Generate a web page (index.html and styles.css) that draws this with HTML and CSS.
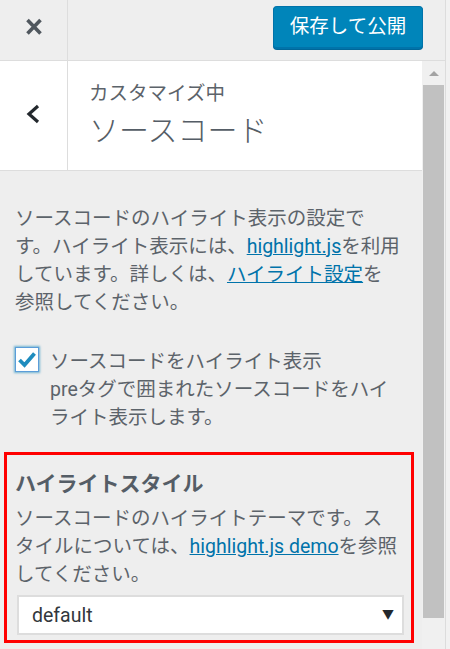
FILE: index.html
```html
<!DOCTYPE html>
<html lang="ja">

<head>
    <meta charset="utf-8">
    <title>ソースコード - カスタマイズ</title>
    <link rel="stylesheet" href="styles.css">
</head>

<body>
    <div class="sidebar">
        <!-- top bar: close and publish -->
        <div class="topbar">
            <div class="close">
                <svg width="20" height="20" viewBox="0 0 20 20">
                    <path d="M3.5 3 L16.5 16.5 M16.5 3 L3.5 16.5" stroke="#50575e" stroke-width="3.6" fill="none" />
                </svg>
            </div>
            <div class="actions">
                <span class="publish">保存して公開</span>
            </div>
        </div>

        <div class="main">
            <div class="panel">
                <div class="head">
                    <div class="back">
                        <svg width="20" height="24" viewBox="0 0 20 24">
                            <polyline points="14,4 5,12 14,20" stroke="#23282d" stroke-width="3.2" fill="none" />
                        </svg>
                    </div>
                    <div class="head-title">
                        <span class="crumb">カスタマイズ中</span>
                        <h2 class="section-name">ソースコード</h2>
                    </div>
                </div>

                <div class="content">
                    <!-- line breaks kept as in the original panel -->
                    <p class="desc">ソースコードのハイライト表示の設定で<br>す。ハイライト表示には、<a href="#">highlight.js</a>を利用<br>しています。詳しくは、<a href="#">ハイライト設定</a>を<br>参照してください。</p>

                    <div class="check-row">
                        <span class="checkbox">
                            <svg width="22" height="22" viewBox="0 0 22 22">
                                <polyline points="3.5,11 8.5,16 18.5,4.5" stroke="#1e8cbe" stroke-width="3.8" fill="none" />
                            </svg>
                        </span>
                        <div class="check-text">
                            <div class="check-label">ソースコードをハイライト表示</div>
                            <div class="check-desc">preタグで囲まれたソースコードをハイ<br>ライト表示します。</div>
                        </div>
                    </div>

                    <!-- highlighted control (red frame) -->
                    <div class="control">
                        <div class="control-title">ハイライトスタイル</div>
                        <div class="control-desc">ソースコードのハイライトテーマです。ス<br>タイルについては、<a href="#">highlight.js demo</a>を参照<br>してください。</div>
                        <div class="select">
                            <span>default</span>
                            <span class="caret">▼</span>
                        </div>
                    </div>
                </div>
            </div>

            <div class="scrollbar">
                <div class="arrow"></div>
                <div class="thumb"></div>
            </div>
        </div>
    </div>
</body>

</html>
```

FILE: styles.css
```css
html,
body {
    margin: 0;
    height: 100%;
    background: #f1f1f1;
}

body {
    font-family: Roboto, "Noto Sans CJK JP", sans-serif;
    color: #5c636a;
    overflow: hidden;
}

.sidebar {
    width: 445px;
    height: 649px;
    border-right: 1px solid #dcdcdc;
    background: #eeeeee;
    display: flex;
    flex-direction: column;
}

/* top bar */
.topbar {
    height: 60px;
    border-bottom: 1px solid #dddddd;
    display: flex;
    flex-shrink: 0;
}

.close {
    width: 68px;
    border-right: 1px solid #dddddd;
    display: flex;
    justify-content: center;
    padding-top: 17px;
    box-sizing: border-box;
}

.actions {
    flex: 1;
    display: flex;
    justify-content: flex-end;
    padding: 6px 22px 0 0;
}

.publish {
    box-sizing: border-box;
    width: 150px;
    height: 43px;
    line-height: 39px;
    text-align: center;
    font-size: 19.5px;
    color: #ffffff;
    background: #0085ba;
    border: 1px solid #0073aa;
    border-bottom-width: 2px;
    border-radius: 4px;
    box-shadow: 0 1px 0 #006799;
}

/* body of panel */
.main {
    flex: 1;
    display: flex;
    min-height: 0;
}

.panel {
    width: 422px;
    overflow: hidden;
}

.head {
    height: 109px;
    background: #ffffff;
    border-bottom: 1px solid #dddddd;
    display: flex;
}

.back {
    width: 68px;
    border-right: 1px solid #dddddd;
    display: flex;
    justify-content: center;
    padding-top: 41px;
    box-sizing: border-box;
}

.head-title {
    padding: 19px 0 0 21px;
}

.crumb {
    display: block;
    font-size: 19.5px;
    line-height: 28px;
}

.section-name {
    margin: 3px 0 0;
    font-size: 30px;
    line-height: 40px;
    font-weight: 300;
    color: #555d66;
}

.content {
    padding-top: 34px;
}

.desc {
    margin: 0;
    padding: 0 6px 0 15px;
    font-size: 19.5px;
    line-height: 28px;
}

a {
    color: #0073aa;
    text-decoration: underline;
}

.check-row {
    display: flex;
    margin-top: 31px;
    padding: 0 6px 0 15px;
    font-size: 19.5px;
    line-height: 28px;
}

.checkbox {
    flex-shrink: 0;
    box-sizing: border-box;
    width: 24px;
    height: 25px;
    margin: -1px 11px 0 0;
    background: #ffffff;
    border: 1px solid #5b9dd9;
    box-shadow: 0 0 2px 1px rgba(30, 140, 190, 0.6);
    display: flex;
    align-items: center;
    justify-content: center;
}

.control {
    margin: 20px 8px 0 4px;
    border: 3px solid #ff0000;
    padding: 14px 2px 5px 8px;
}

.control-title {
    font-size: 21px;
    line-height: 30px;
    font-weight: bold;
    color: #555d66;
}

.control-desc {
    margin-top: 6px;
    font-size: 19.5px;
    line-height: 28px;
}

.select {
    box-sizing: border-box;
    height: 40px;
    margin: 6px 0 0 2px;
    width: 387px;
    background: #ffffff;
    border: 2px solid #dddddd;
    display: flex;
    align-items: center;
    justify-content: space-between;
    padding: 0 8px 0 13px;
    font-size: 19.5px;
    color: #32373c;
}

.caret {
    font-size: 12px;
    color: #23282d;
    margin-top: -4px;
}

/* fake scrollbar */
.scrollbar {
    width: 23px;
    background: #f0f0f0;
    display: flex;
    flex-direction: column;
    align-items: center;
}

.arrow {
    margin: 10px 0 9px;
    width: 0;
    height: 0;
    border-left: 5px solid transparent;
    border-right: 5px solid transparent;
    border-bottom: 5px solid #a3a3a3;
}

.thumb {
    width: 21px;
    height: 533px;
    background: #c1c1c1;
}
```
